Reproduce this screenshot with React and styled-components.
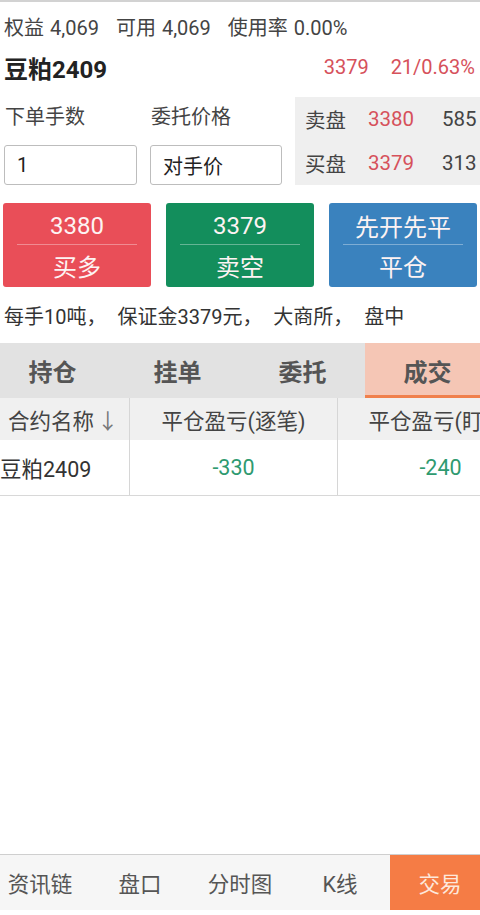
import React from "react";
import styled, { createGlobalStyle } from "styled-components";

const Global = createGlobalStyle`
  html, body { margin: 0; padding: 0; background: #fff; }
  body { font-family: Roboto, "Noto Sans CJK SC", sans-serif; color: #333; }
  * { box-sizing: border-box; }
`;

const Page = styled.div`
  height: 915px;
  width: 480px;
  overflow: hidden;
  display: flex;
  flex-direction: column;
  border-top: 2px solid #d2d2d2;
`;

const AccountRow = styled.div`
  height: 48px;
  display: flex;
  align-items: center;
  padding-left: 4px;
  gap: 17px;
  font-size: 20px;
  color: #444;
  white-space: nowrap;
`;

const Stat = styled.span`
  & > b { font-weight: 400; margin-right: 6px; }
`;

const TitleRow = styled.div`
  height: 34px;
  display: flex;
  align-items: center;
  justify-content: space-between;
  padding: 0 5px 0 4px;
`;

const Title = styled.div`
  font-size: 24px;
  font-weight: 700;
  color: #222;
`;

const Quote = styled.div`
  display: flex;
  gap: 22px;
  font-size: 20px;
  color: #d6515b;
`;

const OrderSection = styled.div`
  margin-top: 13px;
  display: flex;
  padding-left: 4px;
  gap: 13px;
`;

const Field = styled.div`
  width: ${(p) => p.$w}px;
  display: flex;
  flex-direction: column;
`;

const FieldLabel = styled.div`
  height: 36px;
  display: flex;
  align-items: center;
  padding-left: 1px;
  font-size: 20px;
  color: #444;
`;

const Input = styled.div`
  margin-top: 12px;
  height: 40px;
  border: 1px solid #bdbdbd;
  border-radius: 3px;
  display: flex;
  align-items: center;
  padding-left: 12px;
  font-size: 20px;
  color: #222;
  background: #fff;
`;

const Book = styled.div`
  flex: 1;
  height: 88px;
  background: #efefef;
  display: flex;
  flex-direction: column;
  padding-left: 10px;
  overflow: hidden;
`;

const BookRow = styled.div`
  height: 44px;
  display: grid;
  grid-template-columns: 63px 74px 1fr;
  align-items: center;
  font-size: 20.5px;
  color: #444;
  white-space: nowrap;
`;

const Price = styled.span`
  color: #d6515b;
`;

const ButtonRow = styled.div`
  margin-top: 18px;
  display: flex;
  gap: 15px;
  padding-left: 3px;
`;

const TradeButton = styled.div`
  width: 148px;
  height: 84px;
  border-radius: 3px;
  background: ${(p) => p.$bg};
  color: #fdf3f3;
  display: flex;
  flex-direction: column;
  align-items: center;
  font-size: 24px;
`;

const BtnTop = styled.div`
  height: 41px;
  width: 100%;
  display: flex;
  align-items: center;
  justify-content: center;
  padding-top: 4px;
`;

const BtnDivider = styled.div`
  width: 120px;
  height: 1px;
  background: rgba(255, 255, 255, 0.35);
`;

const BtnBottom = styled.div`
  flex: 1;
  display: flex;
  align-items: center;
  justify-content: center;
  padding-bottom: 2px;
`;

const Info = styled.div`
  height: 56px;
  display: flex;
  align-items: center;
  padding-left: 4px;
  font-size: 20px;
  word-spacing: 6px;
  color: #333;
  white-space: nowrap;
`;

const Tabs = styled.div`
  height: 55px;
  background: #e2e2e2;
  display: flex;
  margin-left: -10px;
  width: 500px;
`;

const Tab = styled.div`
  width: 125px;
  display: flex;
  align-items: center;
  justify-content: center;
  font-size: 24px;
  font-weight: 700;
  color: #555;
  background: ${(p) => (p.$active ? "#f5c6b5" : "transparent")};
  border-bottom: 3px solid ${(p) => (p.$active ? "#f0804c" : "transparent")};
  padding-top: 3px;
`;

const Table = styled.div`
  display: flex;
  flex-direction: column;
  width: 543px;
`;

const TRow = styled.div`
  display: grid;
  grid-template-columns: 129px 208px 206px;
  height: ${(p) => p.$h}px;
  background: ${(p) => p.$bg || "#fff"};
  border-bottom: ${(p) => (p.$line ? "1px solid #d8d8d8" : "none")};
`;

const Cell = styled.div`
  display: flex;
  align-items: center;
  justify-content: ${(p) => (p.$left ? "flex-start" : "center")};
  padding-left: ${(p) => p.$pl || 0}px;
  border-left: ${(p) => (p.$first ? "none" : "1px solid #d6d6d6")};
  font-size: 21.5px;
  color: ${(p) => p.$color || "#444"};
  white-space: nowrap;
  overflow: hidden;
`;

const Arrow = styled.span`
  color: #777;
  margin-left: 3px;
`;

const Spacer = styled.div`
  flex: 1;
`;

const Nav = styled.div`
  height: 56px;
  margin-bottom: 5px;
  border-top: 1px solid #cfcfcf;
  background: #f6f6f6;
  display: flex;
  margin-left: -10px;
  width: 500px;
`;

const NavItem = styled.div`
  width: 100px;
  display: flex;
  align-items: center;
  justify-content: center;
  font-size: 21.5px;
  color: ${(p) => (p.$active ? "#fde8dc" : "#555")};
  background: ${(p) => (p.$active ? "#f57c45" : "transparent")};
`;

export default function App() {
  return (
    <>
      <Global />
      <Page>
        <AccountRow>
          <Stat>
            <b>权益</b>4,069
          </Stat>
          <Stat>
            <b>可用</b>4,069
          </Stat>
          <Stat>
            <b>使用率</b>0.00%
          </Stat>
        </AccountRow>
        <TitleRow>
          <Title>豆粕2409</Title>
          <Quote>
            <span>3379</span>
            <span>21/0.63%</span>
          </Quote>
        </TitleRow>
        <OrderSection>
          <Field $w={133}>
            <FieldLabel>下单手数</FieldLabel>
            <Input>1</Input>
          </Field>
          <Field $w={132}>
            <FieldLabel>委托价格</FieldLabel>
            <Input>对手价</Input>
          </Field>
          <Book>
            <BookRow>
              <span>卖盘</span>
              <Price>3380</Price>
              <span>585</span>
            </BookRow>
            <BookRow>
              <span>买盘</span>
              <Price>3379</Price>
              <span>313</span>
            </BookRow>
          </Book>
        </OrderSection>
        <ButtonRow>
          <TradeButton $bg="#e94e58">
            <BtnTop>3380</BtnTop>
            <BtnDivider />
            <BtnBottom>买多</BtnBottom>
          </TradeButton>
          <TradeButton $bg="#138e5c">
            <BtnTop>3379</BtnTop>
            <BtnDivider />
            <BtnBottom>卖空</BtnBottom>
          </TradeButton>
          <TradeButton $bg="#3a82be">
            <BtnTop>先开先平</BtnTop>
            <BtnDivider />
            <BtnBottom>平仓</BtnBottom>
          </TradeButton>
        </ButtonRow>
        <Info>每手10吨， 保证金3379元， 大商所， 盘中</Info>
        <Tabs>
          <Tab>持仓</Tab>
          <Tab>挂单</Tab>
          <Tab>委托</Tab>
          <Tab $active>成交</Tab>
        </Tabs>
        <Table>
          <TRow $h={42} $bg="#f0f0f0">
            <Cell $first $left $pl={8}>
              合约名称<Arrow>↓</Arrow>
            </Cell>
            <Cell>平仓盈亏(逐笔)</Cell>
            <Cell>平仓盈亏(盯市)</Cell>
          </TRow>
          <TRow $h={56} $line>
            <Cell $first $left $pl={0} $color="#333">
              豆粕2409
            </Cell>
            <Cell $color="#2f9a70">-330</Cell>
            <Cell $color="#2f9a70">-240</Cell>
          </TRow>
        </Table>
        <Spacer />
        <Nav>
          <NavItem>资讯链</NavItem>
          <NavItem>盘口</NavItem>
          <NavItem>分时图</NavItem>
          <NavItem>K线</NavItem>
          <NavItem $active>交易</NavItem>
        </Nav>
      </Page>
    </>
  );
}
